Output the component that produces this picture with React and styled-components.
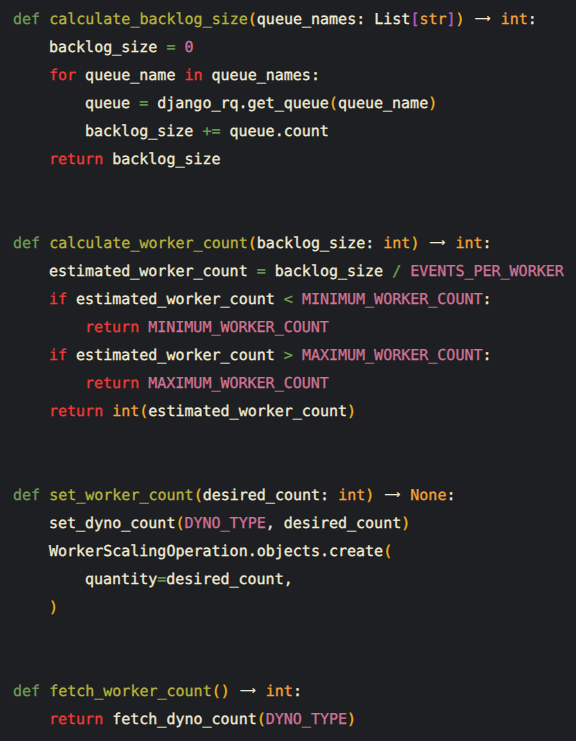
import React from 'react';
import styled, { createGlobalStyle } from 'styled-components';

const GlobalStyle = createGlobalStyle`
  html, body {
    margin: 0;
    padding: 0;
    background: #1e1f22;
  }
`;

const colors = {
  kw: '#6f9b5a',
  fn: '#b7b33c',
  id: '#f1ebd5',
  p: '#f5b918',
  ctl: '#f23a36',
  num: '#d2729b',
  const: '#cf7397',
  type: '#f2a33a',
  br: '#c35bcb',
  op: '#6ea156',
};

// each line: indent level + list of [kind, text]
const lines = [
  [0, [['kw', 'def'], ['id', ' '], ['fn', 'calculate_backlog_size'], ['p', '('], ['id', 'queue_names: List'], ['br', '['], ['type', 'str'], ['br', ']'], ['p', ')'], ['id', ' '], ['arrow'], ['id', ' '], ['type', 'int'], ['id', ':']]],
  [1, [['id', 'backlog_size '], ['op', '='], ['id', ' '], ['num', '0']]],
  [1, [['ctl', 'for'], ['id', ' queue_name '], ['ctl', 'in'], ['id', ' queue_names:']]],
  [2, [['id', 'queue '], ['op', '='], ['id', ' django_rq.get_queue'], ['p', '('], ['id', 'queue_name'], ['p', ')']]],
  [2, [['id', 'backlog_size '], ['op', '+='], ['id', ' queue.count']]],
  [1, [['ctl', 'return'], ['id', ' backlog_size']]],
  [0, []],
  [0, []],
  [0, [['kw', 'def'], ['id', ' '], ['fn', 'calculate_worker_count'], ['p', '('], ['id', 'backlog_size: '], ['type', 'int'], ['p', ')'], ['id', ' '], ['arrow'], ['id', ' '], ['type', 'int'], ['id', ':']]],
  [1, [['id', 'estimated_worker_count '], ['op', '='], ['id', ' backlog_size '], ['op', '/'], ['id', ' '], ['const', 'EVENTS_PER_WORKER']]],
  [1, [['ctl', 'if'], ['id', ' estimated_worker_count '], ['op', '<'], ['id', ' '], ['const', 'MINIMUM_WORKER_COUNT'], ['id', ':']]],
  [2, [['ctl', 'return'], ['id', ' '], ['const', 'MINIMUM_WORKER_COUNT']]],
  [1, [['ctl', 'if'], ['id', ' estimated_worker_count '], ['op', '>'], ['id', ' '], ['const', 'MAXIMUM_WORKER_COUNT'], ['id', ':']]],
  [2, [['ctl', 'return'], ['id', ' '], ['const', 'MAXIMUM_WORKER_COUNT']]],
  [1, [['ctl', 'return'], ['id', ' '], ['type', 'int'], ['p', '('], ['id', 'estimated_worker_count'], ['p', ')']]],
  [0, []],
  [0, []],
  [0, [['kw', 'def'], ['id', ' '], ['fn', 'set_worker_count'], ['p', '('], ['id', 'desired_count: '], ['type', 'int'], ['p', ')'], ['id', ' '], ['arrow'], ['id', ' '], ['type', 'None'], ['id', ':']]],
  [1, [['id', 'set_dyno_count'], ['p', '('], ['const', 'DYNO_TYPE'], ['id', ', desired_count'], ['p', ')']]],
  [1, [['id', 'WorkerScalingOperation.objects.create'], ['p', '(']]],
  [2, [['id', 'quantity'], ['op', '='], ['id', 'desired_count,']]],
  [1, [['p', ')']]],
  [0, []],
  [0, []],
  [0, [['kw', 'def'], ['id', ' '], ['fn', 'fetch_worker_count'], ['p', '()'], ['id', ' '], ['arrow'], ['id', ' '], ['type', 'int'], ['id', ':']]],
  [1, [['ctl', 'return'], ['id', ' fetch_dyno_count'], ['p', '('], ['const', 'DYNO_TYPE'], ['p', ')']]],
];

const CodeBlock = styled.pre`
  margin: 0;
  padding: 5px 13px 8px;
  min-height: 741px;
  box-sizing: border-box;
  background: #1e1f22;
  font-family: "DejaVu Sans Mono", "Liberation Mono", monospace;
  font-size: 15px;
  line-height: 28px;
  color: ${colors.id};
  text-rendering: geometricPrecision;
  -webkit-text-stroke: 0.3px currentColor;
`;

const Line = styled.div`
  height: 28px;
  padding-left: ${(p) => p.$indent * 36}px;
  white-space: pre;
`;

const Token = styled.span`
  color: ${(p) => colors[p.$kind]};
`;

const Arrow = styled.span`
  display: inline-block;
  width: 18px;
  text-align: center;
  font-family: "DejaVu Sans", sans-serif;
  font-size: 11px;
  line-height: 28px;
  vertical-align: top;
  color: ${colors.id};
`;

export default function App() {
  return (
    <>
      <GlobalStyle />
      <CodeBlock>
        {lines.map(([indent, tokens], i) => (
          <Line key={i} $indent={indent}>
            {tokens.map(([kind, text], j) =>
              kind === 'arrow' ? (
                <Arrow key={j}>⟶</Arrow>
              ) : (
                <Token key={j} $kind={kind}>
                  {text}
                </Token>
              )
            )}
          </Line>
        ))}
      </CodeBlock>
    </>
  );
}
